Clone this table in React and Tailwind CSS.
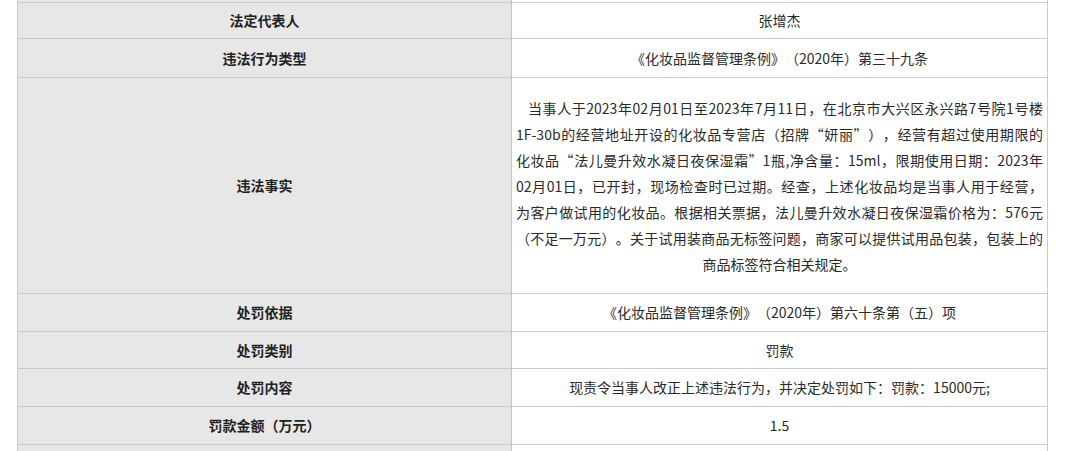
const factLines = [
  '当事人于2023年02月01日至2023年7月11日，在北京市大兴区永兴路7号院1号楼',
  '1F-30b的经营地址开设的化妆品专营店（招牌“妍丽”），经营有超过使用期限的',
  '化妆品“法儿曼升效水凝日夜保湿霜”1瓶,净含量：15ml，限期使用日期：2023年',
  '02月01日，已开封，现场检查时已过期。经查，上述化妆品均是当事人用于经营，',
  '为客户做试用的化妆品。根据相关票据，法儿曼升效水凝日夜保湿霜价格为：576元',
  '（不足一万元）。关于试用装商品无标签问题，商家可以提供试用品包装，包装上的',
];

const Facts = () => (
  <div className="w-full px-[4px] leading-[26px]">
    {factLines.map((line, i) => (
      <div key={i} className={`[text-align-last:justify] ${i === 0 ? 'pl-[12px]' : ''}`}>
        {line}
      </div>
    ))}
    <div className="text-center">商品标签符合相关规定。</div>
  </div>
);

const rows = [
  { label: '法定代表人', value: '张增杰', h: 'h-[36px]' },
  { label: '违法行为类型', value: '《化妆品监督管理条例》（2020年）第三十九条', h: 'h-[39px]' },
  { label: '违法事实', value: <Facts />, h: 'h-[216px]' },
  { label: '处罚依据', value: '《化妆品监督管理条例》（2020年）第六十条第（五）项', h: 'h-[38px]' },
  { label: '处罚类别', value: '罚款', h: 'h-[37px]' },
  { label: '处罚内容', value: '现责令当事人改正上述违法行为，并决定处罚如下：罚款：15000元;', h: 'h-[38px]' },
  { label: '罚款金额（万元）', value: '1.5', h: 'h-[38px]' },
  { label: '', value: '', h: 'h-[20px]' },
];

const Row = ({ label, value, h }) => (
  <div className={`flex border-b border-[#cbcbcb] ${h}`}>
    <div className="w-[494px] shrink-0 bg-[#e7e7e7] border-r border-[#c4c4c4] flex items-center justify-center text-[14px] font-bold text-[#222]">
      {label}
    </div>
    <div className="flex-1 bg-white flex items-center justify-center text-center text-[14px] text-[#2a2a2a]">
      {value}
    </div>
  </div>
);

export default function App() {
  return (
    <div
      className="w-[1080px] h-[451px] overflow-hidden bg-white pl-[17px] [text-spacing-trim:space-all]"
      style={{ fontFamily: '"Microsoft YaHei", "Noto Sans CJK SC", "Noto Sans", sans-serif' }}
    >
      <div className="w-[1031px] border-l border-r border-[#cbcbcb]">
        <div className="flex h-[3px] border-b border-[#cbcbcb]">
          <div className="w-[494px] bg-[#e7e7e7] border-r border-[#c4c4c4]" />
          <div className="flex-1 bg-white" />
        </div>
        {rows.map((r, i) => (
          <Row key={i} {...r} />
        ))}
      </div>
    </div>
  );
}
